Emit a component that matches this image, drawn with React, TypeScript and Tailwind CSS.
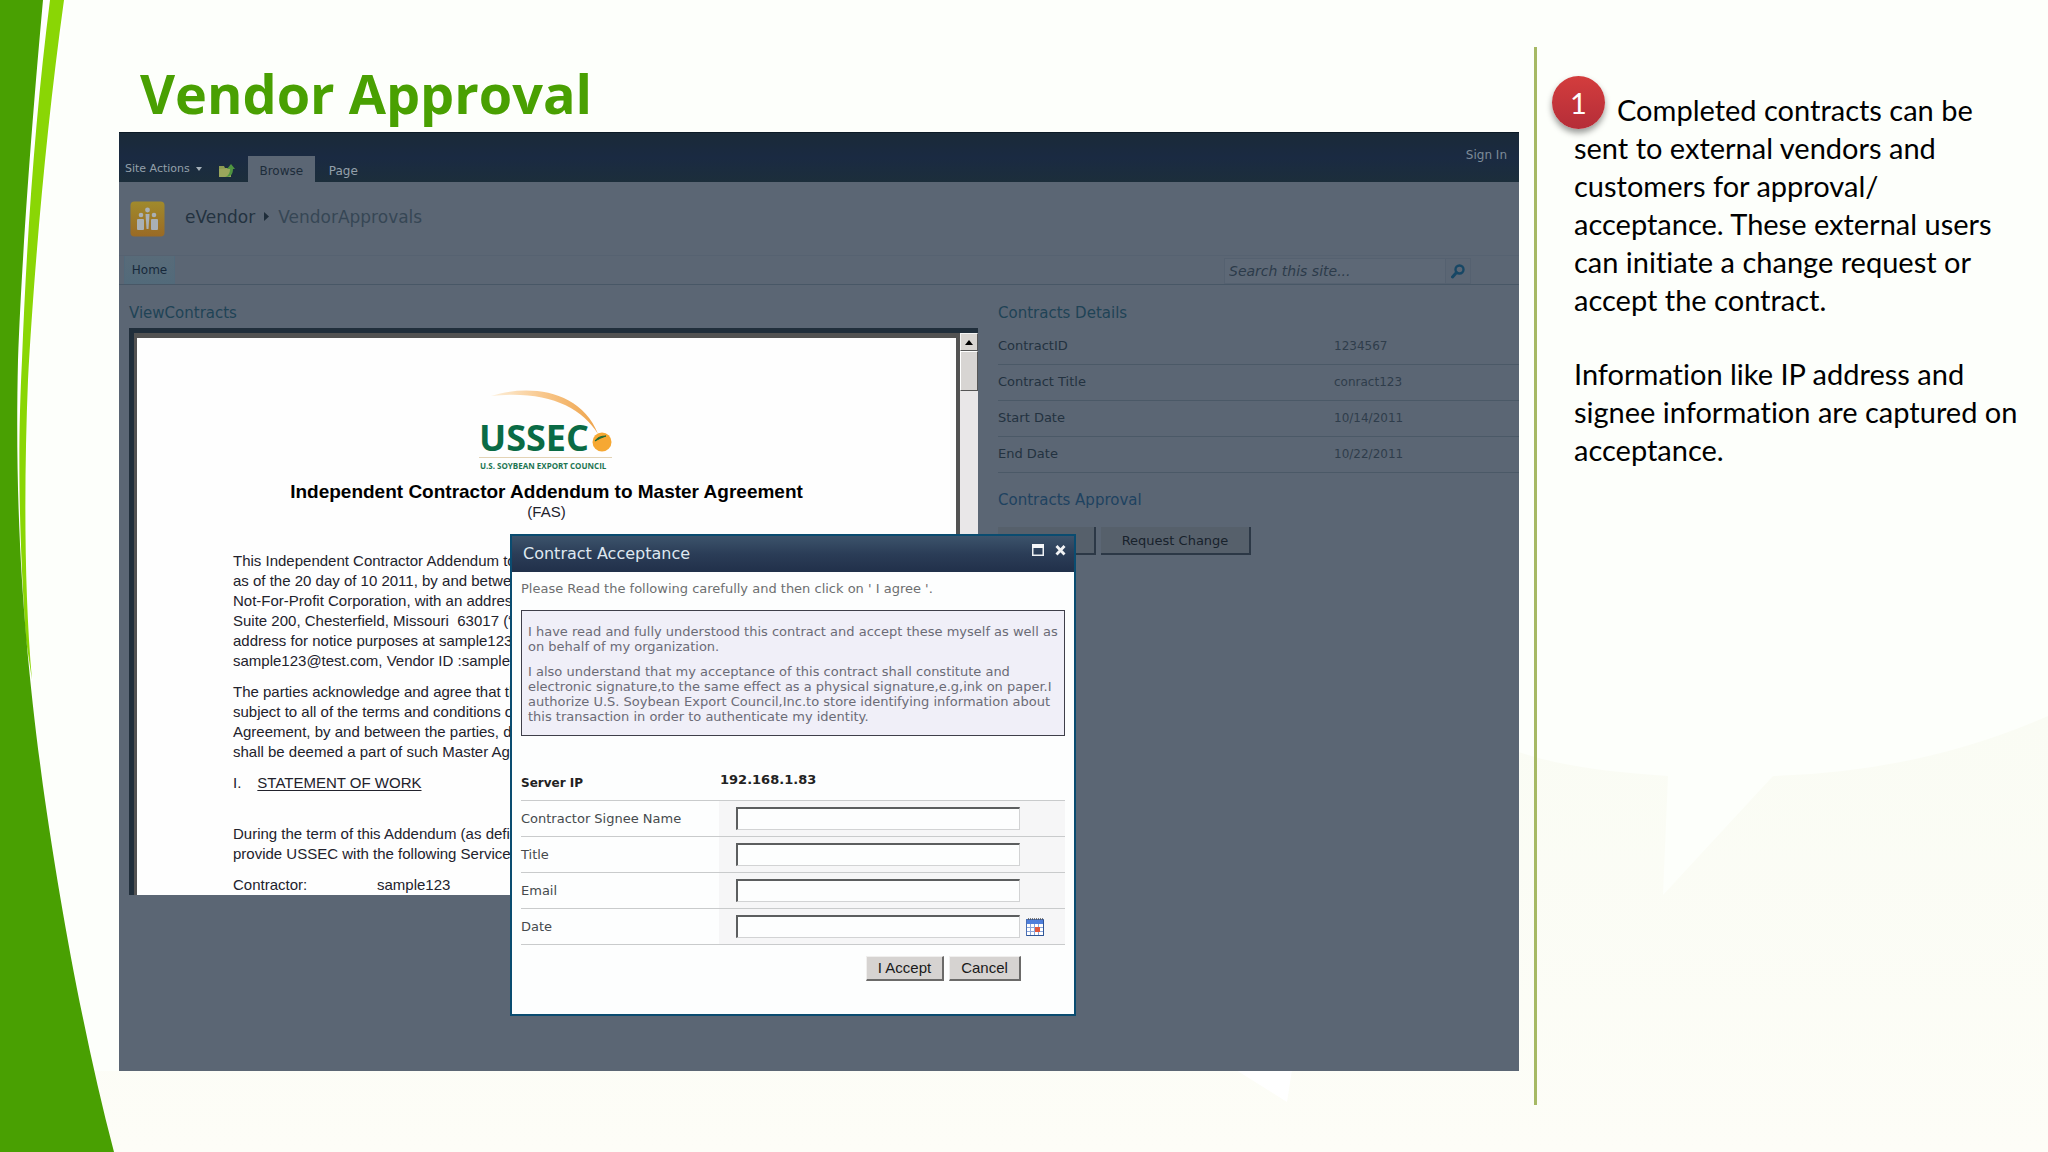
const details = [
  { label: "ContractID", value: "1234567" },
  { label: "Contract Title", value: "conract123" },
  { label: "Start Date", value: "10/14/2011" },
  { label: "End Date", value: "10/22/2011" },
];

const fields = [
  { id: "signee", label: "Contractor Signee Name" },
  { id: "title", label: "Title" },
  { id: "email", label: "Email" },
  { id: "date", label: "Date", calendar: true },
];

function Backdrop() {
  return (
    <div className="absolute inset-0 -z-10 overflow-hidden bg-[#fdfffb]" aria-hidden="true">
      <svg className="h-full w-full" viewBox="0 0 2048 1152" preserveAspectRatio="none">
        <defs>
          <linearGradient id="fade" x1="0" y1="0" x2="0" y2="1">
            <stop offset="0" stopColor="#fafcf4" />
            <stop offset="1" stopColor="#fdfdf7" />
          </linearGradient>
        </defs>
        <path
          d="M1519 752 Q1570 770 1668 776 L1663 895 L1773 776 Q1920 772 2048 716 V1152 H0 V1071 H1519 Z"
          fill="url(#fade)"
        />
        <path d="M1236 1070 H1292 L1287 1102 Z" fill="#fff" />
        {/* left swoosh */}
        <path d="M0 0 H66 C48 130 34 280 27 420 C24 500 25 600 33 680 L20 700 L0 700 Z" fill="#fff" />
        <path
          d="M50 0 H64 C46 130 34 270 28 380 C24 480 24 590 32 680 L26 640 C18 520 18 440 22 360 C27 230 36 110 50 0 Z"
          fill="#8ad605"
        />
        <path d="M0 0 H43 C33 110 22 250 18 360 C14 530 26 660 43 786 C58 892 82 1030 114 1152 H0 Z" fill="#49a002" />
      </svg>
    </div>
  );
}

function FolderUp() {
  return (
    <svg width="18" height="16" viewBox="0 0 18 16">
      <path d="M1 3 h5 l1 2 h6 v9 H1z" fill="#8d9b52" />
      <path d="M1 6 l12 -1 v9 H1z" fill="#9aa65c" />
      <path d="M7 14 C11 13 12 9 12 6 H9 L13 1 L17 6 H15 C15 11 13 14 7 14z" fill="#4f9440" />
    </svg>
  );
}

function SiteLogo() {
  return (
    <svg width="35" height="36" viewBox="0 0 35 36">
      <defs>
        <linearGradient id="site" x1="0" y1="0" x2="0" y2="1">
          <stop offset="0" stopColor="#a08a2c" />
          <stop offset="1" stopColor="#9a6a25" />
        </linearGradient>
      </defs>
      <rect x="0.5" y="0.5" width="34" height="35" rx="4" fill="url(#site)" />
      <g fill="#a9b0b6">
        <rect x="7" y="18" width="7" height="11" rx="1" />
        <rect x="21" y="18" width="7" height="11" rx="1" />
        <circle cx="11" cy="14" r="2.3" />
        <circle cx="24" cy="14" r="2.3" />
        <circle cx="17.5" cy="9" r="2.4" />
        <path d="M15.5 13 h4 l-1 15 h-2z" />
      </g>
    </svg>
  );
}

function UssecLogo() {
  return (
    <svg width="136" height="84" viewBox="0 0 136 84" role="img" aria-label="USSEC">
      <defs>
        <linearGradient id="arc" x1="0" y1="0" x2="1" y2="0">
          <stop offset="0" stopColor="#fdf0dc" />
          <stop offset="0.5" stopColor="#f8c68a" />
          <stop offset="1" stopColor="#eea34a" />
        </linearGradient>
      </defs>
      <text x="0" y="63" className="fill-[#0a6b45] font-['Open_Sans',sans-serif] text-[36px] font-bold">
        USSEC
      </text>
      <path d="M12 8 C50 -4 102 2 119 46 C102 18 66 2 12 8 Z" fill="url(#arc)" />
      <circle cx="123" cy="54" r="9.5" fill="#f6a833" />
      <path d="M116 53 Q119 48 127 48 Q121 50 116 53Z" fill="#1f6b35" stroke="#1f6b35" strokeWidth="1" />
      <path d="M0 69.500 H133" stroke="#e3d3b5" strokeWidth="1" />
      <text x="1" y="81" className="fill-[#1d7552] font-['Open_Sans',sans-serif] text-[8px] font-bold">
        U.S. SOYBEAN EXPORT COUNCIL
      </text>
    </svg>
  );
}

function CalendarIcon() {
  return (
    <svg width="18" height="18" viewBox="0 0 18 18">
      <rect x="0.5" y="1.500" width="17" height="16" fill="#fff" stroke="#4a6fb5" />
      <rect x="1" y="2" width="16" height="4" fill="#4f7fdc" />
      <path d="M2 1 H17" stroke="#555" strokeWidth="1.500" strokeDasharray="1 1" />
      <path d="M1 9.500 H17 M1 13.500 H17 M4.500 6 V17 M8.500 6 V17 M12.500 6 V17" stroke="#8ba6dc" />
      <rect x="9" y="9" width="5" height="5" fill="#e2583e" />
      <path d="M17.500 2 V17.500 H1" stroke="#2f5596" fill="none" />
    </svg>
  );
}

function Contract() {
  return (
    <div className="flex h-[567px] w-[849px] overflow-hidden border-t-5 border-l-5 border-[#202e3b]">
      <article className="flex-1 overflow-hidden border-t-5 border-r-4 border-l-3 border-[#525252] bg-[#fefefe] font-['Liberation_Sans',sans-serif] text-[15px] leading-[20px] whitespace-nowrap text-[#22222c]">
        <header className="flex flex-col items-center pt-[50px]">
          <UssecLogo />
          <h2 className="mt-[10px] text-[19px] leading-[20px] font-bold text-black">
            Independent Contractor Addendum to Master Agreement
          </h2>
          <p>(FAS)</p>
        </header>
        <div className="mt-[29px] space-y-[11px] pl-[96px]">
          <p>
            This Independent Contractor Addendum to
            <br />
            as of the 20 day of 10 2011, by and between
            <br />
            Not-For-Profit Corporation, with an address
            <br />
            Suite 200, Chesterfield, Missouri&nbsp; 63017 (“
            <br />
            address for notice purposes at sample123,
            <br />
            sample123@test.com, Vendor ID :sample123
          </p>
          <p>
            The parties acknowledge and agree that the
            <br />
            subject to all of the terms and conditions of
            <br />
            Agreement, by and between the parties, dated
            <br />
            shall be deemed a part of such Master Agreement
          </p>
          <p className="flex gap-4">
            <span>I.</span>
            <span className="underline underline-offset-2">STATEMENT OF WORK</span>
          </p>
          <p className="pt-5">
            During the term of this Addendum (as defined
            <br />
            provide USSEC with the following Services
          </p>
          <p className="grid grid-cols-[144px_1fr]">
            <span>Contractor:</span>
            <span>sample123</span>
          </p>
        </div>
      </article>
      {/* scrollbar */}
      <div className="flex w-[18px] flex-col bg-[#e9e7e8]">
        <button
          aria-label="Scroll up"
          className="flex h-[18px] items-center justify-center border border-t-[#f4f4f4] border-r-[#555] border-b-[#555] border-l-[#f4f4f4] bg-[#d8d5d2]"
        >
          <svg width="8" height="5" viewBox="0 0 8 5">
            <path d="M4 0 L8 5 H0z" fill="#000" />
          </svg>
        </button>
        <div className="h-[40px] border border-t-white border-r-[#555] border-b-[#555] border-l-white bg-[#d8d5d3]" />
      </div>
    </div>
  );
}

function AcceptanceDialog() {
  return (
    <section
      role="dialog"
      aria-label="Contract Acceptance"
      className="absolute top-[402px] left-[391px] w-[566px] border-2 border-[#0a4c70] bg-[#fdfefe] text-[13px]"
    >
      <header className="flex h-[36px] items-center justify-between bg-linear-to-b from-[#3c536b] via-[#2b3d57] to-[#21304a] pr-[8px] pl-[11px]">
        <h2 className="text-[16px] leading-[20px] text-[#dfe8f0]">Contract Acceptance</h2>
        <div className="flex gap-[11px] pb-[8px]">
          <button aria-label="Maximize">
            <svg width="12" height="12" viewBox="0 0 12 12">
              <path d="M0.750 1 H11.250 V11.250 H0.750z" fill="none" stroke="#eef1f4" strokeWidth="1.500" />
              <rect x="0" y="0" width="12" height="4" fill="#f4f6f8" />
            </svg>
          </button>
          <button aria-label="Close">
            <svg width="11" height="12" viewBox="0 0 11 12">
              <path d="M1.500 2 L9.500 10.500 M9.500 2 L1.500 10.500" stroke="#f1f3f5" strokeWidth="2.800" />
            </svg>
          </button>
        </div>
      </header>
      <div className="px-[9px] pt-[7px] pb-[33px]">
        <p className="leading-[20px] text-[#6d6f70]">
          Please Read the following carefully and then click on ' I agree '.
        </p>
        <div className="mt-[11px] space-y-[10px] border border-[#3f3f4a] bg-[#f0eff8] pt-[13px] pb-[11px] pl-[6px] leading-[15px] whitespace-nowrap text-[#6b6b76]">
          <p>
            I have read and fully understood this contract and accept these myself as well as
            <br />
            on behalf of my organization.
          </p>
          <p>
            I also understand that my acceptance of this contract shall constitute and
            <br />
            electronic signature,to the same effect as a physical signature,e.g,ink on paper.I
            <br />
            authorize U.S. Soybean Export Council,Inc.to store identifying information about
            <br />
            this transaction in order to authenticate my identity.
          </p>
        </div>
        <form className="mt-[29px]">
          <div className="grid h-[36px] grid-cols-[199px_1fr] border-b border-[#c9cbcc] font-bold text-[#222]">
            <span className="pt-[8px] text-[12px] leading-[20px]">Server IP</span>
            <span className="pt-[5px] leading-[20px]">192.168.1.83</span>
          </div>
          {fields.map((field) => (
            <div key={field.id} className="grid h-[36px] grid-cols-[198px_1fr] border-b border-[#c9cbcc]">
              <label htmlFor={field.id} className="self-center text-[#454a4d]">
                {field.label}
              </label>
              <div className="flex items-center gap-[6px] bg-[#f6f6f7] pl-[17px]">
                <input
                  id={field.id}
                  type="text"
                  className="h-[23px] w-[284px] border-t-2 border-r border-b border-l-2 border-t-[#5c5e5f] border-r-[#d2d3d4] border-b-[#d2d3d4] border-l-[#5c5e5f] bg-[#fdfefe] px-1"
                />
                {field.calendar && (
                  <button type="button" aria-label="Pick a date">
                    <CalendarIcon />
                  </button>
                )}
              </div>
            </div>
          ))}
          <div className="mt-[11px] flex justify-end gap-[5px] pr-[44px] font-['Liberation_Sans',sans-serif] text-[15px] text-[#1a1a1a]">
            <button
              type="button"
              className="h-[25px] w-[78px] border-t border-r-2 border-b-2 border-l border-t-[#f0efee] border-r-[#6b6a69] border-b-[#6b6a69] border-l-[#f0efee] bg-[#d6d3d1]"
            >
              I Accept
            </button>
            <button
              type="button"
              className="h-[25px] w-[72px] border-t border-r-2 border-b-2 border-l border-t-[#f0efee] border-r-[#6b6a69] border-b-[#6b6a69] border-l-[#f0efee] bg-[#d6d3d1]"
            >
              Cancel
            </button>
          </div>
        </form>
      </div>
    </section>
  );
}

function VendorSite() {
  return (
    <div className="relative flex-1 overflow-hidden bg-[#5b6674] font-['DejaVu_Sans',sans-serif] text-[13px] text-[#233240]">
      {/* ribbon */}
      <header className="flex h-[50px] justify-between border-t border-[#0c1a26] bg-linear-to-b from-[#1a2a38] via-[#1a2a42] to-[#1c2e3b] text-[11px] text-[#94a0ab]">
        <div className="flex items-end">
          <button className="flex items-center gap-[6px] pb-[5px] pl-[6px] leading-[16px]">
            Site Actions
            <svg width="6" height="4" viewBox="0 0 6 4">
              <path d="M0 0 H6 L3 4z" fill="#a6b0b9" />
            </svg>
          </button>
          <button className="pb-[3px] pl-[16px]" aria-label="Navigate up">
            <FolderUp />
          </button>
          <nav className="flex pl-[12px] text-[12px] leading-[22px]">
            <a href="#browse" className="w-[67px] bg-[#5b6674] pt-[4px] text-center text-[#1d2c3a]">
              Browse
            </a>
            <a href="#page" className="pt-[4px] pl-[14px]">
              Page
            </a>
          </nav>
        </div>
        <a href="#signin" className="pt-[14px] pr-[12px] text-[12px] leading-[16px] text-[#7d8b98]">
          Sign In
        </a>
      </header>

      <div className="flex h-[73px] items-center gap-[20px] pl-[11px]">
        <SiteLogo />
        <h2 className="flex items-center gap-[9px] pb-[4px] text-[17px] leading-[20px]">
          <span>eVendor</span>
          <svg width="5" height="9" viewBox="0 0 5 9">
            <path d="M0 0 L5 4.500 L0 9z" fill="#1f2d3a" />
          </svg>
          <span className="text-[#364655]">VendorApprovals</span>
        </h2>
      </div>

      <div className="flex h-[30px] justify-between border-t border-b border-t-[#566271] border-b-[#485766] pl-[5px]">
        <a
          href="#home"
          className="w-[51px] border-x border-[#52697a] bg-linear-to-b from-[#586b79] to-[#526a7a] text-center text-[12px] leading-[28px] text-[#17283a]"
        >
          Home
        </a>
        <form className="mr-[48px] flex items-stretch pt-[2px]">
          <input
            type="search"
            aria-label="Search this site"
            placeholder="Search this site..."
            className="w-[222px] border border-[#556170] bg-[#5d6876] px-1 text-[14px] italic placeholder:text-[#2c3b4a]"
          />
          <button
            type="button"
            aria-label="Search"
            className="flex w-[25px] items-center justify-center border border-l-0 border-[#556170]"
          >
            <svg width="14" height="15" viewBox="0 0 14 15" fill="none" stroke="#174765">
              <circle cx="8.500" cy="5.500" r="4" strokeWidth="2.400" />
              <path d="M5.500 8.500 L1.500 13" strokeWidth="3" strokeLinecap="round" />
            </svg>
          </button>
        </form>
      </div>

      <div className="flex gap-[20px] pl-[10px]">
        <section>
          <h3 className="pt-[18px] pb-[5px] text-[15px] leading-[20px] text-[#1f4356]">ViewContracts</h3>
          <Contract />
        </section>
        <section className="flex-1">
          <h3 className="pt-[18px] pb-[5px] text-[15px] leading-[20px] text-[#1f4356]">Contracts Details</h3>
          <table className="w-full text-left">
            <tbody>
              {details.map((row) => (
                <tr key={row.label} className="h-[36px] border-b border-[#4b5967]">
                  <th scope="row" className="w-[336px] font-normal">
                    {row.label}
                  </th>
                  <td className="text-[12px] text-[#2f3d4b]">{row.value}</td>
                </tr>
              ))}
            </tbody>
          </table>
          <h3 className="pt-[17px] pb-[17px] text-[15px] leading-[20px] text-[#1e4260]">Contracts Approval</h3>
          <div className="flex gap-[5px] text-[#18222c]">
            <button className="h-[28px] w-[98px] border-r-2 border-b-2 border-[#2c3846] bg-[#56606b]">Approve</button>
            <button className="h-[28px] w-[150px] border-r-2 border-b-2 border-[#2c3846] bg-[#56606b] pt-[2px]">
              Request Change
            </button>
          </div>
        </section>
      </div>

      <AcceptanceDialog />
    </div>
  );
}

export default function App() {
  return (
    <div className="relative isolate flex min-h-screen">
      <Backdrop />
      <main className="flex flex-1 flex-col pr-[15px] pb-[81px] pl-[119px]">
        <h1 className="pt-[54px] pl-[21px] font-['Open_Sans',sans-serif] text-[54px] leading-[78px] font-bold text-[#49a002]">
          Vendor Approval
        </h1>
        <VendorSite />
      </main>
      <aside className="mt-[47px] mb-[47px] w-[514px] border-l-3 border-[#a6b964] pt-[44px] pl-[37px] font-['Lato',sans-serif] text-[29px] leading-[38px] whitespace-nowrap text-black [font-variant-ligatures:none]">
        <p className="relative indent-[43px]">
          <span className="absolute top-[-15px] left-[-22px] flex size-[53px] items-center justify-center rounded-full bg-linear-to-b from-[#d33d3d] to-[#b52d38] indent-0 text-white shadow-[0_4px_6px_rgba(0,0,0,0.4)]">
            1
          </span>
          Completed contracts can be
          <br />
          sent to external vendors and
          <br />
          customers for approval/
          <br />
          acceptance. These external users
          <br />
          can initiate a change request or
          <br />
          accept the contract.
        </p>
        <p className="mt-[36px]">
          Information like IP address and
          <br />
          signee information are captured on
          <br />
          acceptance.
        </p>
      </aside>
    </div>
  );
}
